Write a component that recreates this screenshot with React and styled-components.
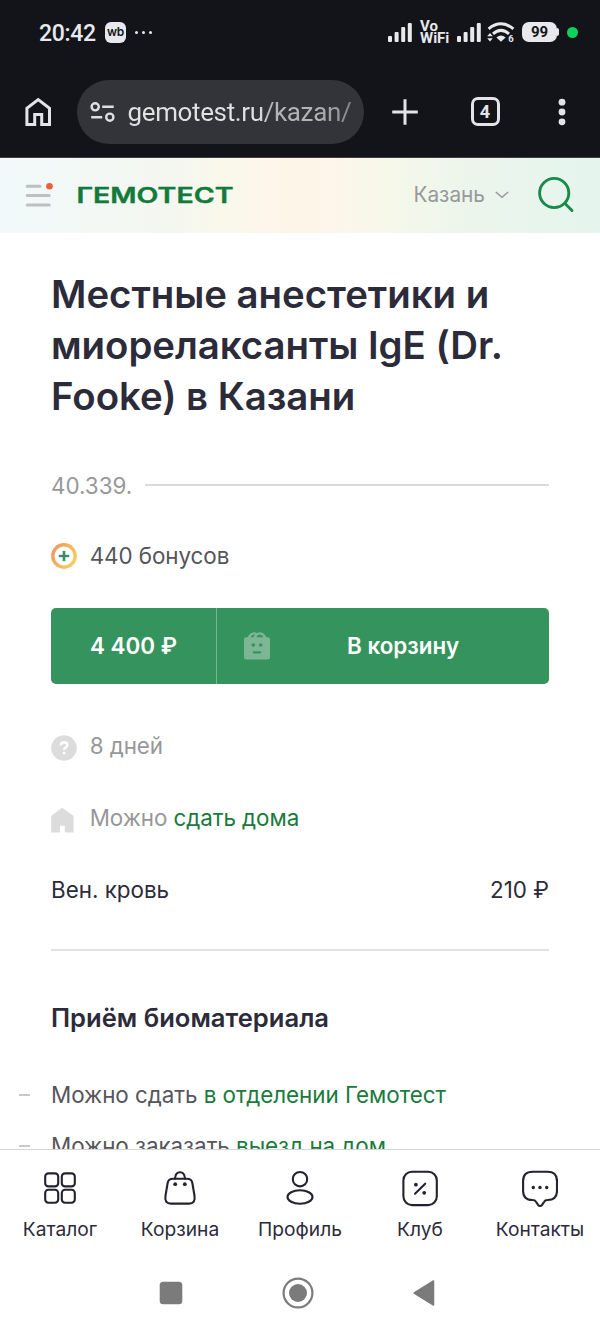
import React from "react"
import styled, { createGlobalStyle } from "styled-components"

const GlobalStyle = createGlobalStyle`
  body {
    margin: 0;
    background: #fff;
    font-family: Inter, "Liberation Sans", sans-serif;
  }
  * {
    box-sizing: border-box;
  }
  svg {
    display: block;
    flex: none;
  }
`

const Signal = () => (
  <svg width="26" height="22" viewBox="0 0 26 22" fill="#e9e9ed">
    <rect x="1" y="15" width="4" height="6" rx="1" />
    <rect x="7.6" y="11" width="4" height="10" rx="1" />
    <rect x="14.2" y="6" width="4" height="15" rx="1" />
    <rect x="20.8" y="2" width="4" height="19" rx="1" />
  </svg>
)

const Wifi = () => (
  <svg width="28" height="24" viewBox="0 0 28 24" fill="none" stroke="#e9e9ed" strokeWidth="3">
    <path d="M1.6 8.8q12.4-10 24.8 0" />
    <path d="M6 13.8q8-6.800 16 0" />
    <path d="M9.4 17.4q4.600-3.600 9.200 0L14 21.8z" fill="#e9e9ed" stroke="none" />
    <path d="M.2 16.3L3 13l2.8 3.300zM.2 18.300h5.600L3 21.600z" fill="#e9e9ed" stroke="none" />
    <text x="21.3" y="22" fontSize="9.5" fontWeight="700" fontFamily="Roboto, sans-serif" fill="#e9e9ed" stroke="none">6</text>
  </svg>
)

const BrowserHome = () => (
  <svg width="28" height="32" viewBox="0 0 28 32" fill="none" stroke="#e4e3ea" strokeWidth="3">
    <path d="M2.9 28.5V12.2L14.2 3.6l11.3 8.6v16.3h-7.8V18.5h-7v10z" />
  </svg>
)

const Tune = () => (
  <svg width="26" height="22" viewBox="0 0 26 22" fill="none" stroke="#dedee3" strokeWidth="2.4">
    <circle cx="5.2" cy="5.8" r="3.6" />
    <path d="M12.2 5.8H23.7M1.2 16.2H12.2" />
    <circle cx="19.8" cy="16.2" r="3.6" />
  </svg>
)

const Plus = () => (
  <svg width="28" height="28" viewBox="0 0 28 28" stroke="#e4e3ea" strokeWidth="3">
    <path d="M14 1.2v25.6M1.2 14h25.6" />
  </svg>
)

const Kebab = () => (
  <svg width="10" height="28" viewBox="0 0 10 28" fill="#e4e3ea">
    <circle cx="5" cy="4.2" r="3.4" />
    <circle cx="5" cy="14" r="3.4" />
    <circle cx="5" cy="23.8" r="3.4" />
  </svg>
)

const Burger = () => (
  <svg width="32" height="28" viewBox="0 0 32 28" stroke="#bdbfc0" strokeWidth="3" strokeLinecap="round">
    <path d="M4.2 5.2h12.8M4.2 14.6h22M4.2 24h22" />
    <circle cx="26.5" cy="5.2" r="3.3" fill="#e8603c" stroke="none" />
  </svg>
)

const Wordmark = () => (
  <svg width="160" height="28" viewBox="0 0 160 28">
    <text
      x="0.5"
      y="21.8"
      fontFamily="Inter, sans-serif"
      fontWeight="600"
      fontSize="21.2"
      fill="#127a3a"
      stroke="#127a3a"
      strokeWidth="0.4"
      textLength="157"
      lengthAdjust="spacingAndGlyphs"
    >
      ГЕМОТЕСТ
    </text>
  </svg>
)

const Chevron = () => (
  <svg width="14" height="8" viewBox="0 0 14 8" fill="none" stroke="#97999a" strokeWidth="1.5">
    <path d="M.8 1l6.2 5.2L13.2 1" />
  </svg>
)

const Search = () => (
  <svg width="38" height="38" viewBox="0 0 38 38" fill="none" stroke="#198a4a" strokeWidth="2.9" strokeLinecap="round">
    <circle cx="17.2" cy="17" r="14.6" />
    <path d="M28 27.5l7 7" />
  </svg>
)

const Bonus = () => (
  <svg width="26" height="26" viewBox="0 0 26 26" fill="none">
    <defs>
      <linearGradient id="ring" x1="0" y1="0" x2="1" y2="0.6">
        <stop offset="0" stopColor="#ee9560" />
        <stop offset="1" stopColor="#f6ca60" />
      </linearGradient>
    </defs>
    <circle cx="13" cy="13" r="11.2" stroke="url(#ring)" strokeWidth="3.4" />
    <path d="M7.8 13h10.4" stroke="#3a8390" strokeWidth="2.4" />
    <path d="M13 7.8v10.4" stroke="#2c9656" strokeWidth="2.6" />
  </svg>
)

const CartFace = () => (
  <svg width="28" height="30" viewBox="0 0 28 30">
    <path d="M1 8.3q0-2 2-2h1.5Q7 1.5 11 1.3q1.8 0 3 1 1.2-1 3-1 4 .2 6.5 5H25q2 0 2 2V26q0 2.5-2.5 2.5h-21Q1 28.5 1 26z" fill="#7db694" />
    <path d="M7.5 6.3Q9 3 12 3.6q-1 1-1.500 2.700zM13.500 6.300Q14.500 3.200 17 3.400q2.500.3 3.500 2.900z" fill="#35945e" />
    <circle cx="10.3" cy="14" r="1.8" fill="#35945e" />
    <circle cx="17.7" cy="14" r="1.8" fill="#35945e" />
    <path d="M10.8 21.3h6.4" stroke="#35945e" strokeWidth="2.2" strokeLinecap="round" />
  </svg>
)

const Question = () => (
  <svg width="26" height="26" viewBox="0 0 26 26">
    <circle cx="13" cy="13" r="12.8" fill="#dcdcdc" />
    <path d="M9.8 10.3q.3-3 3.3-3 3.2.1 3.2 2.8 0 1.5-1.7 2.5-1.5.9-1.5 2.400" fill="none" stroke="#fff" strokeWidth="2.4" />
    <circle cx="13.1" cy="18" r="1.5" fill="#fff" />
  </svg>
)

const House = () => (
  <svg width="26" height="26" viewBox="0 0 26 26" fill="#dcdcdc">
    <path d="M11.2.8l10.5 7.4q.9.7.9 1.8v15.600h-8.800v-6.800H9v6.800H.2V10q0-1.100.9-1.800z" />
  </svg>
)

const CatalogIcon = () => (
  <>
    <rect x="3.2" y="3.4" width="13" height="13" rx="3.2" />
    <rect x="19.8" y="3.4" width="13" height="13" rx="3.2" />
    <rect x="3.2" y="19.8" width="13" height="13" rx="3.2" />
    <rect x="19.8" y="19.8" width="13" height="13" rx="3.2" />
  </>
)

const BagIcon = () => (
  <>
    <path d="M11 8.7h14q4.6 0 5.300 4l2.200 13q1.300 7.900-5.500 7.900H9q-6.800 0-5.500-7.900l2.200-13q.7-4 5.300-4z" />
    <path d="M13 8.700q.5-6.400 5-6.400t5 6.400" />
    <circle cx="13.2" cy="14.2" r="1.9" fill="#23232f" stroke="none" />
    <circle cx="22.8" cy="14.2" r="1.9" fill="#23232f" stroke="none" />
  </>
)

const ProfileIcon = () => (
  <>
    <circle cx="18" cy="9.2" r="7.2" />
    <ellipse cx="18" cy="27" rx="12.5" ry="6.7" />
  </>
)

const ClubIcon = () => (
  <>
    <rect x="1.400" y="1.700" width="33.400" height="33.400" rx="8.500" />
    <path d="M13 23.7l10.2-10" />
    <circle cx="13.9" cy="14.7" r="1.9" fill="#23232f" stroke="none" />
    <circle cx="22.2" cy="22.8" r="1.9" fill="#23232f" stroke="none" />
  </>
)

const ChatIcon = () => (
  <>
    <path d="M10.5 1.7h15.2q9.3 0 9.3 9.3v10q0 9-9.3 9-2.7 0-3.5 1.8l-1.9 2.9q-2.3 2.5-4.4 0L14 31.8q-1-1.8-3.7-1.8-9.2 0-9.2-9V11q0-9.3 9.4-9.3z" />
    <circle cx="11.3" cy="17.5" r="1.7" fill="#23232f" stroke="none" />
    <circle cx="18" cy="17.5" r="1.7" fill="#23232f" stroke="none" />
    <circle cx="24.7" cy="17.5" r="1.7" fill="#23232f" stroke="none" />
  </>
)

const tabs = [
  { label: "Каталог", Icon: CatalogIcon },
  { label: "Корзина", Icon: BagIcon },
  { label: "Профиль", Icon: ProfileIcon },
  { label: "Клуб", Icon: ClubIcon },
  { label: "Контакты", Icon: ChatIcon },
]

const App = () => (
  <Screen>
    <GlobalStyle />
    <StatusBar>
      <Time>20:42</Time>
      <AppBadge>wb</AppBadge>
      <More>
        <i />
        <i />
        <i />
      </More>
      <StatusRight>
        <Signal />
        <VoWifi>
          <span>Vo</span>
          <span>WiFi</span>
        </VoWifi>
        <Signal />
        <WifiBox>
          <Wifi />
        </WifiBox>
        <Battery>99</Battery>
        <GreenDot />
      </StatusRight>
    </StatusBar>
    <BrowserBar>
      <BrowserHome />
      <AddressBar>
        <Tune />
        <Url>gemotest.ru/kazan/</Url>
      </AddressBar>
      <BrowserActions>
        <Plus />
        <TabCount>4</TabCount>
        <Kebab />
      </BrowserActions>
    </BrowserBar>
    <Header>
      <Burger />
      <Logo>
        <Wordmark />
      </Logo>
      <City>
        Казань
        <Chevron />
      </City>
      <Search />
    </Header>
    <Main>
      <Title>
        Местные анестетики и миорелаксанты IgE (Dr. Fooke) в Казани
      </Title>
      <Code>
        40.339.
        <Rule />
      </Code>
      <InfoRow $color="#55555b" $gap="40px">
        <Bonus />
        <span>440 бонусов</span>
      </InfoRow>
      <BuyButton>
        <Price>4 400 ₽</Price>
        <CartFace />
        <BuyLabel>В корзину</BuyLabel>
      </BuyButton>
      <InfoRow $color="#97979a" $gap="48px" $drop="4px">
        <Question />
        <span>8 дней</span>
      </InfoRow>
      <InfoRow $color="#97979a" $gap="44px" $drop="4px">
        <House />
        <span>
          Можно <Link>сдать дома</Link>
        </span>
      </InfoRow>
      <Material>
        <span>Вен. кровь</span>
        <span>210 ₽</span>
      </Material>
      <Subtitle>Приём биоматериала</Subtitle>
      <List>
        <Item>
          Можно сдать <Link>в отделении Гемотест</Link>
        </Item>
        <Item>
          Можно заказать <Link>выезд на дом</Link>
        </Item>
      </List>
    </Main>
    <TabBar>
      {tabs.map(({ label, Icon }) => (
        <Tab key={label}>
          <svg width="36" height="38" viewBox="0 0 36 38" fill="none" stroke="#23232f" strokeWidth="2.1" strokeLinecap="round">
            <Icon />
          </svg>
          {label}
        </Tab>
      ))}
    </TabBar>
    <SystemNav>
      <svg width="24" height="24" viewBox="0 0 24 24">
        <rect x="0.7" y="0.7" width="22.6" height="22.6" rx="3.5" fill="#7b7b7b" />
      </svg>
      <svg width="32" height="32" viewBox="0 0 32 32">
        <circle cx="16" cy="16" r="14.4" fill="none" stroke="#7b7b7b" strokeWidth="2.2" />
        <circle cx="16" cy="16" r="9" fill="#7b7b7b" />
      </svg>
      <svg width="22" height="28" viewBox="0 0 22 28">
        <path d="M1.2 14L20.5 2v24z" fill="#7b7b7b" stroke="#7b7b7b" strokeWidth="1.5" strokeLinejoin="round" />
      </svg>
    </SystemNav>
  </Screen>
)

export default App

const Screen = styled.div`
  display: flex;
  flex-direction: column;
  width: 600px;
  height: 1333px;
  overflow: hidden;
  background: #fff;
`
const StatusBar = styled.div`
  display: flex;
  align-items: center;
  flex: none;
  height: 64px;
  padding: 0 22px 0 39px;
  background: #131419;
  color: #e9e9ed;
  font-family: Roboto, sans-serif;
`
const Time = styled.div`
  width: 66px;
  font-size: 23px;
  font-weight: 500;
  line-height: 26px;
  letter-spacing: -0.3px;
  margin-top: 3px;
`
const AppBadge = styled.div`
  width: 21px;
  height: 21px;
  border-radius: 6px;
  background: #e9e9ed;
  color: #131419;
  font-family: Inter, sans-serif;
  font-size: 12px;
  font-weight: 600;
  line-height: 19px;
  letter-spacing: -0.4px;
  text-align: center;
`
const More = styled.div`
  display: flex;
  gap: 4px;
  margin-left: 9px;

  i {
    width: 3px;
    height: 3px;
    border-radius: 50%;
    background: #e9e9ed;
  }
`
const StatusRight = styled.div`
  display: flex;
  align-items: center;
  margin-left: auto;
`
const VoWifi = styled.div`
  display: flex;
  flex-direction: column;
  width: 31px;
  margin: -1px 5px 0 7px;
  font-size: 15px;
  font-weight: 700;
  line-height: 12px;
`
const WifiBox = styled.div`
  margin: -1px 0 0 5px;
`
const Battery = styled.div`
  width: 35px;
  height: 20px;
  margin: 0 10px 0 7px;
  border-radius: 7px;
  background: #e9e9ed;
  color: #131419;
  font-size: 15px;
  font-weight: 700;
  line-height: 21px;
  text-align: center;

  &::after {
    content: "";
    float: right;
    width: 2px;
    height: 8px;
    margin: 6px -2px 0 -2px;
    border-radius: 0 2px 2px 0;
    background: #e9e9ed;
  }
`
const GreenDot = styled.div`
  width: 11px;
  height: 11px;
  border-radius: 50%;
  background: #0bd25c;
`
const BrowserBar = styled.div`
  display: flex;
  align-items: center;
  flex: none;
  height: 93.5px;
  padding: 3px 34px 0 24px;
  background: #131419;
  border-bottom: 1px solid #3f3d42;
`
const AddressBar = styled.div`
  display: flex;
  align-items: center;
  width: 287px;
  height: 64px;
  margin-left: 24.5px;
  padding-left: 13px;
  border-radius: 32px;
  background: #333439;
`
const Url = styled.div`
  margin-left: 12px;
  font-family: Roboto, sans-serif;
  font-size: 26px;
  line-height: 34px;
  letter-spacing: -0.37px;
  background: linear-gradient(90deg, #e2e2e6 58%, #b4b4b8 64%, #b4b4b8 85%, #85858a);
  background-clip: text;
  color: transparent;
`
const BrowserActions = styled.div`
  display: flex;
  align-items: center;
  justify-content: space-between;
  flex: 1;
  margin-left: 27.5px;
  margin-right: -1px;
`
const TabCount = styled.div`
  width: 29px;
  height: 29px;
  margin-right: 6px;
  border: 3px solid #e4e3ea;
  border-radius: 7px;
  color: #e4e3ea;
  font-family: Roboto, sans-serif;
  font-size: 18px;
  font-weight: 700;
  line-height: 24px;
  text-align: center;
`
const Header = styled.header`
  display: flex;
  align-items: center;
  flex: none;
  height: 75.5px;
  padding: 0 25px 0 23px;
  background: linear-gradient(90deg, #f1f9fa 0%, #f4f7f0 28%, #f9f8ea 38%, #fef5e9 47%, #fef5e9 53%, #f6f8ea 64%, #ebf5ec 80%, #e4f5ed 100%);
`
const Logo = styled.div`
  margin-left: 21px;
`
const City = styled.div`
  display: flex;
  align-items: center;
  gap: 10px;
  margin: -1px 28px 0 auto;
  color: #97999a;
  font-size: 20.8px;
`
const Main = styled.main`
  flex: 1;
  min-height: 0;
  overflow: hidden;
  padding: 36px 51px 0;
  color: #2c2b3a;
  font-size: 22.4px;
  line-height: 32px;
`
const Title = styled.h1`
  margin: 0 -20px 0 0;
  font-size: 38.4px;
  font-weight: 600;
  line-height: 51.2px;
  letter-spacing: -0.03px;
`
const Code = styled.div`
  display: flex;
  align-items: center;
  gap: 13px;
  margin-top: 47px;
  color: #97979a;
`
const Rule = styled.div`
  flex: 1;
  height: 2px;
  margin-top: -2px;
  background: #dadada;
`
const InfoRow = styled.div`
  display: flex;
  align-items: center;
  gap: 12.7px;
  height: 28px;
  margin-top: ${props => props.$gap};
  color: ${props => props.$color};
  letter-spacing: -0.07px;

  svg {
    margin-top: ${props => props.$drop || 0};
  }
`
const BuyButton = styled.div`
  display: flex;
  align-items: center;
  height: 76px;
  margin-top: 38px;
  border-radius: 5px;
  background: #35945e;
  color: #fff;
  font-weight: 600;

  svg {
    margin-left: 26px;
  }
`
const Price = styled.div`
  width: 166px;
  height: 76px;
  border-right: 1px solid #79b592;
  line-height: 76px;
  text-align: center;
`
const BuyLabel = styled.div`
  margin-left: 76px;
`
const Link = styled.a`
  color: #197a3c;
`
const Material = styled.div`
  display: flex;
  justify-content: space-between;
  height: 77px;
  margin-top: 42px;
  border-bottom: 2px solid #e2e2e2;
`
const Subtitle = styled.h2`
  margin: 50px 0 0;
  font-size: 25.6px;
  font-weight: 600;
  line-height: 34px;
`
const List = styled.ul`
  margin: 44px 0 0;
  padding: 0;
  list-style: none;
  color: #55555b;
  letter-spacing: -0.05px;
`
const Item = styled.li`
  display: block;
  margin: 0 0 19.2px -32px;

  &::before {
    content: "";
    display: inline-block;
    width: 11px;
    height: 2px;
    margin-right: 21px;
    vertical-align: 7px;
    background: #c9c9c9;
  }
`
const TabBar = styled.nav`
  display: flex;
  flex: none;
  height: 104px;
  border-top: 1.5px solid #d6d6d8;
  background: #fff;
`
const Tab = styled.div`
  display: flex;
  flex-direction: column;
  align-items: center;
  flex: 1;
  padding-top: 19.5px;
  color: #2c2b3a;
  font-size: 19.2px;
  line-height: 26px;
  gap: 8px;
`
const SystemNav = styled.div`
  display: flex;
  align-items: center;
  justify-content: center;
  flex: none;
  gap: 99px;
  height: 80px;
  padding-right: 6px;
`
